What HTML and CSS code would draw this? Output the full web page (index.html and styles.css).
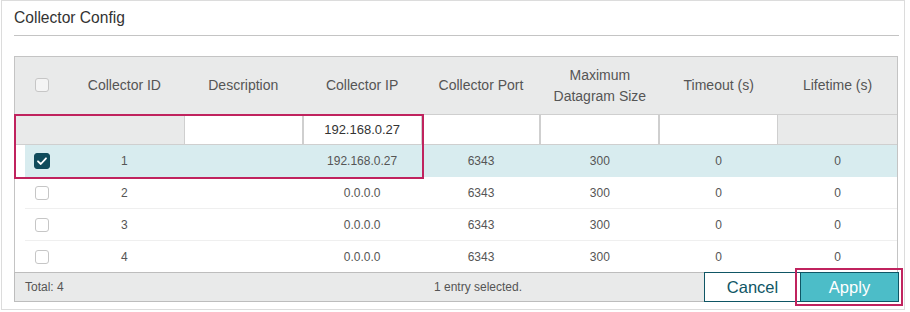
FILE: index.html
```html
<!DOCTYPE html>
<html>
<head>
<meta charset="utf-8">
<link rel="stylesheet" href="styles.css">
</head>
<body>
<div class="panel">
  <div class="title">Collector Config</div>
  <div class="table">
    <div class="thead">
      <div class="hcell chk"><span class="cb cb-head"></span></div>
      <div class="hcell">Collector ID</div>
      <div class="hcell">Description</div>
      <div class="hcell">Collector IP</div>
      <div class="hcell">Collector Port</div>
      <div class="hcell">Maximum<br>Datagram Size</div>
      <div class="hcell">Timeout (s)</div>
      <div class="hcell">Lifetime (s)</div>
    </div>
    <div class="filter">
      <div class="fcell gray span2"></div>
      <div class="fcell input"></div>
      <div class="fcell input">192.168.0.27</div>
      <div class="fcell input"></div>
      <div class="fcell input"></div>
      <div class="fcell input"></div>
      <div class="fcell gray"></div>
    </div>
    <div class="tbody">
      <div class="row selected">
        <div class="cell chk"><span class="cb checked"><svg viewBox="0 0 16 16" width="16" height="16"><path d="M4 8.3 L6.8 11 L12 5.3" fill="none" stroke="#fff" stroke-width="1.8" stroke-linecap="round" stroke-linejoin="round"/></svg></span></div>
        <div class="cell">1</div><div class="cell"></div><div class="cell">192.168.0.27</div><div class="cell">6343</div><div class="cell">300</div><div class="cell">0</div><div class="cell">0</div>
      </div>
      <div class="row">
        <div class="cell chk"><span class="cb"></span></div>
        <div class="cell">2</div><div class="cell"></div><div class="cell">0.0.0.0</div><div class="cell">6343</div><div class="cell">300</div><div class="cell">0</div><div class="cell">0</div>
      </div>
      <div class="row">
        <div class="cell chk"><span class="cb"></span></div>
        <div class="cell">3</div><div class="cell"></div><div class="cell">0.0.0.0</div><div class="cell">6343</div><div class="cell">300</div><div class="cell">0</div><div class="cell">0</div>
      </div>
      <div class="row last">
        <div class="cell chk"><span class="cb"></span></div>
        <div class="cell">4</div><div class="cell"></div><div class="cell">0.0.0.0</div><div class="cell">6343</div><div class="cell">300</div><div class="cell">0</div><div class="cell">0</div>
      </div>
    </div>
  </div>
  <div class="footer">
    <div class="info"><span class="total">Total: 4</span><span class="sel">1 entry selected.</span></div>
    <div class="btn cancel">Cancel</div>
    <div class="btn apply">Apply</div>
  </div>
  <div class="mark mark-filter"></div>
  <div class="mark mark-apply"></div>
</div>
</body>
</html>
```

FILE: styles.css
```css
* { box-sizing: border-box; }
html, body { margin: 0; padding: 0; background: #fff; }
body { font-family: "Liberation Sans", Arial, sans-serif; }

.panel {
  position: relative;
  margin-left: 1px;
  width: 904px;
  height: 310px;
  border: 1px solid #dcdcdc;
  padding: 0 5px 0 12px;
}

.title {
  font-size: 15.6px;
  line-height: 20px;
  color: #333;
  padding: 7px 0 7px 0;
  border-bottom: 1px solid #c4c4c4;
  width: 885px;
}

.table {
  margin-top: 20px;
  width: 884px;
  border: 1px solid #c4c4c4;
  border-bottom: none;
}

.thead {
  display: grid;
  grid-template-columns: 50px repeat(7, 1fr);
  height: 57px;
  background: #e9eaea;
  font-size: 14px;
  color: #555;
}
.hcell {
  display: flex;
  align-items: center;
  justify-content: center;
  text-align: center;
  line-height: 21px;
}
.hcell.chk { justify-content: flex-start; padding-left: 20px; }

.cb {
  display: inline-block;
  width: 14px;
  height: 14px;
  border: 1px solid #c6c6c6;
  border-radius: 3px;
  background: #fff;
}
.cb-head { background: #f4f4f4; margin-top: -2px; }
.cb.checked {
  width: 16px;
  height: 16px;
  margin-left: -1px;
  background: #104b5b;
  border-color: #104b5b;
  position: relative;
}
.cb.checked svg { position: absolute; left: -1px; top: -1px; }

.filter {
  display: grid;
  grid-template-columns: 50px repeat(7, 1fr);
  height: 31px;
  border-top: 1px solid #cfcfcf;
  border-bottom: 1px solid #cfcfcf;
}
.fcell {
  display: flex;
  align-items: center;
  justify-content: center;
  font-size: 13px;
  color: #333;
}
.fcell.span2 { grid-column: span 2; }
.fcell.gray { background: #e9eaea; }
.fcell.input {
  background: #fff;
  border-left: 1px solid #cfcfcf;
  border-right: 1px solid #cfcfcf;
}

.tbody { margin-left: 10px; }
.row {
  display: grid;
  grid-template-columns: 40px repeat(7, 1fr);
  height: 32px;
  border-bottom: 1px solid #efefef;
  font-size: 12px;
  color: #555;
}
.row.last { border-bottom: none; height: 31px; }
.row.selected { background: #d8ecef; border-bottom-color: #d8ecef; }
.cell {
  display: flex;
  align-items: center;
  justify-content: center;
}
.cell.chk { justify-content: flex-start; padding-left: 10px; }

.footer {
  display: flex;
  width: 885px;
  height: 30px;
}
.info {
  flex: 1;
  display: flex;
  align-items: center;
  background: #e9eaea;
  border: 1px solid #bdbdbd;
  border-right: none;
  font-size: 12px;
  color: #555;
  padding-left: 10px;
}
.total { width: 409px; }
.btn {
  display: flex;
  align-items: center;
  justify-content: center;
  font-size: 16.5px;
  border: 1px solid #0f5665;
}
.cancel { width: 97px; background: #fff; color: #0f5665; }
.apply { width: 98px; background: #4cbdc8; color: #fff; border-left: none; }

.mark {
  position: absolute;
  border: 2px solid #c0235e;
}
.mark-filter { left: 12px; top: 113px; width: 410px; height: 65px; }
.mark-apply { left: 793px; top: 267px; width: 108px; height: 38px; }
```
